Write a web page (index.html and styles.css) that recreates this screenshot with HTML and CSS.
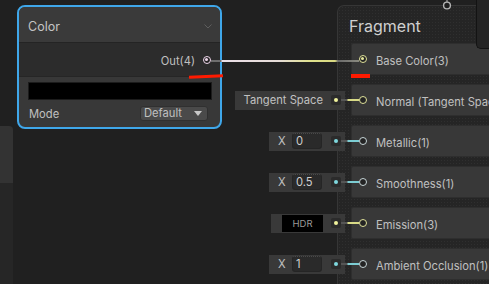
FILE: index.html
```html
<!DOCTYPE html>
<html lang="en">
<head>
  <meta charset="UTF-8" />
  <title>Shader Graph</title>
  <link rel="stylesheet" href="styles.css">
</head>
<body>
  <div class="side">
    <div class="side-tab"></div>
    <div class="side-rest"></div>
  </div>

  <!-- Color property node -->
  <div class="node color-node">
    <div class="node-title">
      <span>Color</span>
      <svg class="chev" width="8" height="5" viewBox="0 0 8 5"><path d="M0.5 0.5 L4 4 L7.5 0.5" fill="none" stroke="#5e5e5e" stroke-width="1"/></svg>
    </div>
    <div class="node-out">
      <span>Out(4)</span>
      <span class="port port-pink on"></span>
    </div>
    <div class="node-body">
      <div class="swatch"></div>
      <div class="mode-row">
        <span>Mode</span>
        <div class="select">Default<span class="caret"></span></div>
      </div>
    </div>
  </div>

  <!-- Master stack -->
  <div class="stack">
    <div class="stack-title">Fragment</div>
    <div class="slots">
      <div class="slot"><span class="port port-yellow on"></span><span class="slot-name">Base Color(3)</span></div>
      <div class="slot"><span class="port port-yellow"></span><span class="slot-name">Normal (Tangent Space)</span></div>
      <div class="slot"><span class="port port-cyan"></span><span class="slot-name">Metallic(1)</span></div>
      <div class="slot"><span class="port port-cyan"></span><span class="slot-name">Smoothness(1)</span></div>
      <div class="slot"><span class="port port-yellow"></span><span class="slot-name">Emission(3)</span></div>
      <div class="slot"><span class="port port-cyan"></span><span class="slot-name">Ambient Occlusion(1)</span></div>
    </div>
  </div>
  <div class="vertex-block"></div>
  <svg class="top-port" width="10" height="12" viewBox="0 0 10 12">
    <line x1="5" y1="0" x2="5" y2="2" stroke="#8a8a8a" stroke-width="1.5"/>
    <circle cx="5" cy="5.5" r="3.4" fill="#1e1e1e" stroke="#b4b4b4" stroke-width="1.4"/>
  </svg>

  <!-- Inline inputs -->
  <div class="inputs">
    <div class="input-row"></div>
    <div class="input-row">
      <div class="inline-node"><span class="label">Tangent Space</span><span class="dot-wrap"><span class="dot yellow"></span></span></div>
      <span class="wire wire-yellow"></span>
    </div>
    <div class="input-row">
      <div class="inline-node"><span class="axis">X</span><span class="field">0</span><span class="dot-wrap"><span class="dot cyan"></span></span></div>
      <span class="wire wire-cyan"></span>
    </div>
    <div class="input-row">
      <div class="inline-node"><span class="axis">X</span><span class="field">0.5</span><span class="dot-wrap"><span class="dot cyan"></span></span></div>
      <span class="wire wire-cyan"></span>
    </div>
    <div class="input-row">
      <div class="inline-node hdr-node"><span class="hdr">HDR</span><span class="dot-wrap"><span class="dot yellow"></span></span></div>
      <span class="wire wire-yellow"></span>
    </div>
    <div class="input-row">
      <div class="inline-node"><span class="axis">X</span><span class="field">1</span><span class="dot-wrap"><span class="dot cyan"></span></span></div>
      <span class="wire wire-cyan"></span>
    </div>
  </div>

  <!-- edge Out(4) -> Base Color(3) -->
  <div class="edge"></div>

  <!-- red marks drawn over the screenshot -->
  <div class="mark mark-out"></div>
  <div class="mark mark-base"></div>
</body>
</html>
```

FILE: styles.css
```css
body {
  margin: 0;
  width: 489px;
  height: 284px;
  overflow: hidden;
  position: relative;
  background-color: #202020;
  font-family: Inter, "Noto Sans", sans-serif;
  font-size: 11.2px;
  color: #c0c0c0;
}

/* left dock edge */
.side {
  position: absolute;
  left: 0;
  top: 126px;
  width: 13px;
  height: 158px;
  display: flex;
  flex-direction: column;
}
.side-tab {
  height: 57px;
  background: #333333;
  border-top-right-radius: 4px;
}
.side-rest {
  flex: 1;
  background: #262626;
}

/* ports */
.port {
  width: 8px;
  height: 8px;
  box-sizing: border-box;
  border-radius: 50%;
  border: 1.5px solid;
  background: #232323;
  flex-shrink: 0;
  position: relative;
}
.port.on::after {
  content: "";
  position: absolute;
  left: 1px;
  top: 1px;
  width: 3px;
  height: 3px;
  border-radius: 50%;
  background: currentColor;
}
.port-pink { color: #eed6ea; border-color: #eed6ea; }
.port-yellow { color: #e4e69c; border-color: #e0e29a; }
.port-cyan { color: #8ad6dc; border-color: #c8d6d8; }

/* Color node */
.color-node {
  position: absolute;
  left: 17px;
  top: 5px;
  width: 205px;
  height: 124px;
  box-sizing: border-box;
  border: 2px solid #3fa7ea;
  border-radius: 8px;
  overflow: hidden;
  display: flex;
  flex-direction: column;
  background: #383838;
}
.node-title {
  height: 36px;
  flex-shrink: 0;
  box-sizing: border-box;
  background: #3a3a3a;
  border-bottom: 1px solid #242424;
  display: flex;
  align-items: center;
  justify-content: space-between;
  padding: 4px 8px 0 9px;
  font-size: 12.5px;
  color: #c4c4c4;
}
.node-out {
  height: 33px;
  flex-shrink: 0;
  background: #2c2c2c;
  border-bottom: 1px solid #262626;
  display: flex;
  align-items: center;
  justify-content: flex-end;
  gap: 8px;
  padding-right: 9px;
}
.node-out span:first-child { margin-top: 2px; }
.node-body {
  flex: 1;
  padding: 5px 8px 0 9px;
}
.swatch {
  height: 18px;
  box-sizing: border-box;
  background: #000;
  border: 1px solid #1c1c1c;
}
.mode-row {
  margin-top: 6px;
  display: flex;
  align-items: center;
  justify-content: space-between;
  padding: 0 4px 0 1px;
}
.select {
  width: 68px;
  height: 15px;
  box-sizing: border-box;
  background: #4a4a4a;
  border: 1px solid #303030;
  border-radius: 3px;
  padding-left: 3px;
  display: flex;
  align-items: center;
  justify-content: space-between;
  line-height: 13px;
}
.caret {
  width: 0;
  height: 0;
  margin-right: 5px;
  border-left: 4px solid transparent;
  border-right: 4px solid transparent;
  border-top: 5px solid #c8c8c8;
}

/* Fragment stack, runs on past the frame */
.stack {
  position: absolute;
  left: 337px;
  top: 5px;
  width: 152px;
  height: 279px;
  box-sizing: border-box;
  border: 1px solid #363636;
  border-right: none;
  border-bottom: none;
  border-top-left-radius: 7px;
  background-color: #252525;
  background-image: radial-gradient(#2f2f2f 0.7px, transparent 0.8px);
  background-size: 3px 3px;
  overflow: hidden;
}
.stack-title {
  height: 37px;
  padding: 2px 0 0 11px;
  box-sizing: border-box;
  display: flex;
  align-items: center;
  font-size: 16px;
  color: #d0d0d0;
}
.slots {
  display: flex;
  flex-direction: column;
  gap: 9px;
  padding-left: 13px;
}
.slot {
  height: 32px;
  box-sizing: border-box;
  background: #383838;
  border: 1px solid #2e2e2e;
  border-right: none;
  border-radius: 2px 0 0 2px;
  display: flex;
  align-items: center;
  gap: 9px;
  padding-left: 7px;
  white-space: nowrap;
  overflow: hidden;
}
.slot-name { margin-top: 3px; }
.vertex-block {
  position: absolute;
  left: 476px;
  top: 0;
  width: 13px;
  height: 49px;
  box-sizing: border-box;
  background: #242424;
  border-left: 1px solid #131313;
  border-bottom: 1px solid #131313;
  border-bottom-left-radius: 5px;
}
.top-port {
  position: absolute;
  left: 442px;
  top: 0;
}

/* inline input nodes */
.inputs {
  position: absolute;
  left: 0;
  top: 43px;
  width: 359px;
  display: flex;
  flex-direction: column;
  gap: 9px;
}
.input-row {
  height: 32px;
  display: flex;
  align-items: center;
  justify-content: flex-end;
}
.inline-node {
  height: 19px;
  background: #393939;
  display: flex;
  align-items: center;
  padding: 0 4px 0 9px;
}
.label { margin-right: 8px; }
.axis { width: 14px; color: #c0c0c0; }
.field {
  width: 30px;
  height: 16px;
  box-sizing: border-box;
  background: #2a2a2a;
  border: 1px solid #252525;
  border-top: 1px dotted #4a4a4a;
  border-radius: 3px;
  padding-left: 3px;
  line-height: 14px;
  margin-right: 9px;
  color: #cfcfcf;
}
.hdr-node { padding-left: 11px; }
.hdr {
  width: 41px;
  height: 17px;
  background: #000;
  color: #9a9a9a;
  font-size: 9.5px;
  display: flex;
  align-items: center;
  justify-content: center;
  margin-right: 8px;
}
.dot-wrap {
  width: 10px;
  height: 10px;
  border-radius: 2px;
  background: #2b2b2b;
  display: flex;
  align-items: center;
  justify-content: center;
}
.dot {
  width: 4px;
  height: 4px;
  border-radius: 50%;
}
.dot.yellow { background: #f0f29c; }
.dot.cyan { background: #7fd8de; }
.wire {
  width: 18px;
  height: 2px;
  margin-left: -4px;
  position: relative;
}
.wire-yellow { background: linear-gradient(to right, #555 0, #555 6px, #d8da86 7px); }
.wire-cyan { background: linear-gradient(to right, #555 0, #555 6px, #7ccdd3 7px); }

/* main edge */
.edge {
  position: absolute;
  left: 211px;
  top: 60px;
  width: 148px;
  height: 2px;
  background: linear-gradient(to right, #6e6e6e 0, #6e6e6e 10px, #ece0e8 11px, #e6dcd8 68px, #e0e28c 100px, #d8d880 124px, #6a6a6a 127px, #8a8a80 148px);
}

.mark {
  position: absolute;
  height: 3px;
  background: #ff1a00;
}
.mark-out {
  left: 189px;
  top: 75px;
  width: 34px;
  transform: rotate(-2.5deg);
}
.mark-base {
  left: 351px;
  top: 74px;
  width: 19px;
  height: 4px;
}
```
